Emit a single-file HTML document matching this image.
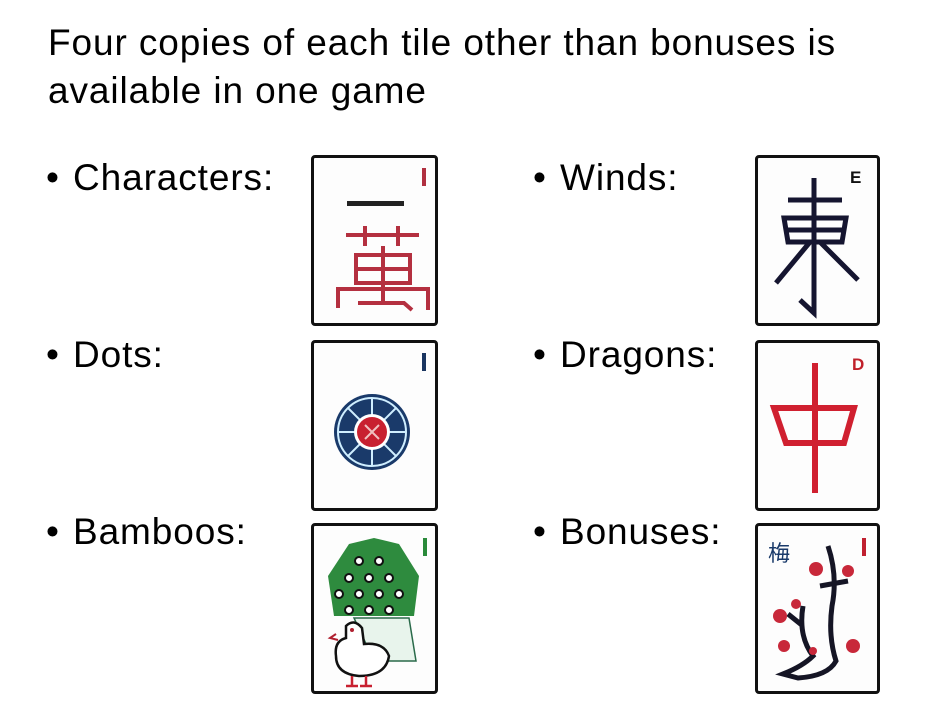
<!DOCTYPE html>
<html><head><meta charset="utf-8"><style>
body{margin:0;width:927px;height:714px;background:#fff;position:relative;overflow:hidden;font-family:"Liberation Sans","Noto Sans CJK JP",sans-serif;color:#000}
.t{position:absolute;font-size:37px;white-space:nowrap;line-height:1;letter-spacing:0.9px}
.b{position:absolute;font-size:37px;line-height:1}
.tile{position:absolute;box-sizing:border-box;border:3px solid #111;border-radius:4px;background:#fdfdfd}
.tile svg{position:absolute;left:0;top:0}
</style></head><body>
<div class="t" style="left:48px;top:24px">Four copies of each tile other than bonuses is</div>
<div class="t" style="left:48px;top:72px">available in one game</div>
<div class="b" style="left:46px;top:159px">•</div><div class="t" style="left:73px;top:159px">Characters:</div>
<div class="b" style="left:46px;top:336px">•</div><div class="t" style="left:73px;top:336px">Dots:</div>
<div class="b" style="left:46px;top:513px">•</div><div class="t" style="left:73px;top:513px">Bamboos:</div>
<div class="b" style="left:533px;top:159px">•</div><div class="t" style="left:560px;top:159px">Winds:</div>
<div class="b" style="left:533px;top:336px">•</div><div class="t" style="left:560px;top:336px">Dragons:</div>
<div class="b" style="left:533px;top:513px">•</div><div class="t" style="left:560px;top:513px">Bonuses:</div>

<div class="tile" style="left:311px;top:155px;width:127px;height:171px">
<svg width="121" height="165">
<rect x="108" y="10" width="4" height="18" fill="#b03040"/>
<rect x="33" y="43" width="57" height="5" fill="#222"/>
<g fill="none" stroke="#b43040" stroke-width="4">
<path d="M32 77H105M51 68V88M84 68V88M42 97H96V125H42ZM42 111H96M69 88V125M24 150V131H114V152M44 145H90L98 152M69 125V145"/>
</g></svg></div>

<div class="tile" style="left:311px;top:340px;width:127px;height:171px">
<svg width="121" height="165">
<rect x="108" y="10" width="4" height="18" fill="#1a3560"/>
<circle cx="58" cy="89" r="38" fill="#1a3a6a"/>
<circle cx="58" cy="89" r="34" fill="none" stroke="#cfeeff" stroke-width="2"/>
<g stroke="#cfeeff" stroke-width="2">
<path d="M58 55V123M24 89H92M34 65L82 113M82 65L34 113"/></g>
<circle cx="58" cy="89" r="18" fill="#fff"/>
<circle cx="58" cy="89" r="15" fill="#c82030"/>
<path d="M51 82L65 96M65 82L51 96" stroke="#f0c0c0" stroke-width="2"/>
</svg></div>

<div class="tile" style="left:311px;top:523px;width:127px;height:171px">
<svg width="121" height="165">
<rect x="109" y="12" width="4" height="18" fill="#2a8a3a"/>
<polygon points="60,12 85,18 105,50 100,90 20,90 14,50 35,18" fill="#2e8b3e"/>
<g fill="#fff" stroke="#111" stroke-width="2">
<circle cx="45" cy="35" r="4"/><circle cx="65" cy="35" r="4"/>
<circle cx="35" cy="52" r="4"/><circle cx="55" cy="52" r="4"/><circle cx="75" cy="52" r="4"/>
<circle cx="25" cy="68" r="4"/><circle cx="45" cy="68" r="4"/><circle cx="65" cy="68" r="4"/><circle cx="85" cy="68" r="4"/>
<circle cx="35" cy="84" r="4"/><circle cx="55" cy="84" r="4"/><circle cx="75" cy="84" r="4"/></g>
<path d="M40 92H95L102 135H60Z" fill="#e8f4ec" stroke="#2a6a4a" stroke-width="1.5"/>
<path d="M32 100Q40 92 48 102L50 118Q70 116 75 130Q72 150 45 150Q22 148 22 130Q20 115 32 112Z" fill="#fff" stroke="#111" stroke-width="2.5"/>
<circle cx="38" cy="104" r="2" fill="#b02030"/>
<path d="M22 108L16 112L24 114" fill="#fff" stroke="#b02030" stroke-width="2"/>
<path d="M38 150V160M52 150V160M32 160H44M46 160H58" stroke="#c82030" stroke-width="2.5"/>
</svg></div>

<div class="tile" style="left:755px;top:155px;width:125px;height:171px">
<svg width="119" height="165">
<text x="92" y="25" font-family="Liberation Sans" font-weight="bold" font-size="17" fill="#111">E</text>
<g fill="none" stroke="#151530" stroke-width="5">
<path d="M56 20V155L42 142M30 42H84M26 60H88L84 84H30ZM30 72H84M52 84L18 125M62 84L100 122"/></g>
</svg></div>

<div class="tile" style="left:755px;top:340px;width:125px;height:171px">
<svg width="119" height="165">
<text x="94" y="27" font-family="Liberation Sans" font-weight="bold" font-size="17" fill="#c0202a">D</text>
<g fill="none" stroke="#d02030" stroke-width="6">
<path d="M57 20V150"/><path d="M16 65H96L86 100H28Z"/></g>
</svg></div>

<div class="tile" style="left:755px;top:523px;width:125px;height:171px">
<svg width="119" height="165">
<text x="10" y="35" font-family="Noto Sans CJK JP" font-size="22" fill="#1a3a6a">梅</text>
<rect x="104" y="12" width="4" height="18" fill="#c02030"/>
<path d="M70 20Q80 50 74 80Q70 110 78 135Q70 150 40 152L25 148Q45 140 55 130Q40 110 45 80M62 60L90 55M45 100L30 88" fill="none" stroke="#151525" stroke-width="5"/>
<g fill="#c8283a"><circle cx="58" cy="43" r="7"/><circle cx="90" cy="45" r="6"/><circle cx="22" cy="90" r="7"/><circle cx="38" cy="78" r="5"/><circle cx="95" cy="120" r="7"/><circle cx="26" cy="120" r="6"/><circle cx="55" cy="125" r="4"/></g>
</svg></div>
</body></html>
